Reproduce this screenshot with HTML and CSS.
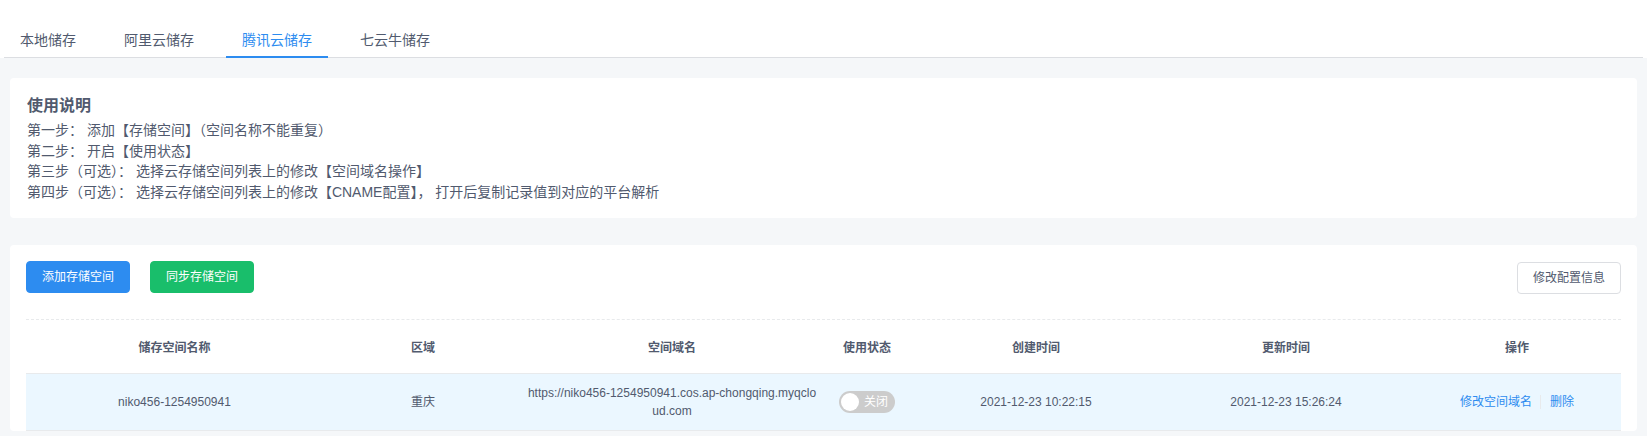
FILE: index.html
```html
<!DOCTYPE html>
<html lang="zh-CN">
<head>
	<meta charset="UTF-8">
	<title>储存配置</title>
	<link rel="stylesheet" href="styles.css">
</head>
<body>
	<div class="tabs">
		<div class="tabs-nav">
			<a href="#" class="tab">本地储存</a>
			<a href="#" class="tab">阿里云储存</a>
			<a href="#" class="tab tab-active">腾讯云储存</a>
			<a href="#" class="tab">七云牛储存</a>
		</div>
	</div>
	<div class="content">
		<div class="panel panel-help">
			<h3 class="help-title">使用说明</h3>
			<p>第一步： 添加【存储空间】（空间名称不能重复）</p>
			<p>第二步： 开启【使用状态】</p>
			<p>第三步（可选）： 选择云存储空间列表上的修改【空间域名操作】</p>
			<p>第四步（可选）： 选择云存储空间列表上的修改【CNAME配置】， 打开后复制记录值到对应的平台解析</p>
		</div>
		<div class="panel panel-list">
			<div class="toolbar">
				<div class="toolbar-left">
					<a href="#" class="btn btn-primary">添加存储空间</a>
					<a href="#" class="btn btn-success">同步存储空间</a>
				</div>
				<a href="#" class="btn btn-default">修改配置信息</a>
			</div>
			<table class="table">
				<colgroup>
					<col style="width:297px">
					<col style="width:200px">
					<col style="width:298px">
					<col style="width:92px">
					<col style="width:246px">
					<col style="width:254px">
					<col>
				</colgroup>
				<thead>
					<tr>
						<th>储存空间名称</th>
						<th>区域</th>
						<th>空间域名</th>
						<th>使用状态</th>
						<th>创建时间</th>
						<th>更新时间</th>
						<th>操作</th>
					</tr>
				</thead>
				<tbody>
					<tr class="row-hover">
						<td>niko456-1254950941</td>
						<td>重庆</td>
						<td class="cell-url">https://niko456-1254950941.cos.ap-chongqing.myqcloud.com</td>
						<td>
							<span class="switch">
								<span class="switch-knob"></span>
								<span class="switch-text">关闭</span>
							</span>
						</td>
						<td>2021-12-23 10:22:15</td>
						<td>2021-12-23 15:26:24</td>
						<td>
							<span class="ops">
								<a href="#">修改空间域名</a>
								<i class="ops-divider"></i>
								<a href="#">删除</a>
							</span>
						</td>
					</tr>
				</tbody>
			</table>
		</div>
	</div>
</body>
</html>
```

FILE: styles.css
```css
* {
	padding: 0;
	margin: 0;
	box-sizing: border-box;
}
body {
	font-family: "Liberation Sans", "Noto Sans CJK SC", sans-serif;
	color: #515a6e;
	background: #f5f7f9;
	height: 436px;
	overflow: hidden;
}
a {
	text-decoration: none;
}
.tabs {
	background: #fff;
	padding: 22px 4px 0;
}
.tabs-nav {
	display: flex;
	gap: 16px;
	border-bottom: 1px solid #dcdee2;
}
.tab {
	display: block;
	padding: 8px 16px 6px;
	font-size: 14px;
	line-height: 20px;
	color: #515a6e;
	border-bottom: 2px solid transparent;
	margin-bottom: -1px;
}
.tab-active {
	color: #2d8cf0;
	border-bottom-color: #2d8cf0;
}
.content {
	padding: 20px 10px 0;
}
.panel {
	background: #fff;
	border-radius: 4px;
}
.panel-help {
	padding: 16px 17px 15px;
	margin-bottom: 27px;
	font-size: 14px;
}
.help-title {
	font-size: 16px;
	line-height: 24px;
	font-weight: bold;
	color: #515a6e;
	margin-bottom: 2px;
}
.panel-help p {
	line-height: 20.7px;
}
.panel-list {
	padding: 16px 16px 0;
}
.toolbar {
	display: flex;
	justify-content: space-between;
	align-items: flex-start;
	padding-bottom: 25px;
	border-bottom: 1px dashed #e8eaec;
}
.toolbar-left {
	display: flex;
	gap: 20px;
}
.btn {
	display: block;
	width: 104px;
	height: 32px;
	line-height: 30px;
	text-align: center;
	font-size: 12px;
	border: 1px solid transparent;
	border-radius: 4px;
	color: #fff;
}
.btn-primary {
	background: #2d8cf0;
	border-color: #2d8cf0;
}
.btn-success {
	background: #19be6b;
	border-color: #19be6b;
}
.btn-default {
	background: #fff;
	border-color: #dcdee2;
	color: #515a6e;
	margin-top: 1px;
}
.table {
	width: 100%;
	table-layout: fixed;
	border-collapse: collapse;
	font-size: 12px;
}
.table th {
	height: 54px;
	font-weight: bold;
	text-align: center;
	color: #515a6e;
	border-bottom: 1px solid #e8eaec;
}
.table td {
	height: 57px;
	text-align: center;
	line-height: 18px;
	border-bottom: 1px solid #e8eaec;
}
.row-hover td {
	background: #ebf7ff;
}
.table td.cell-url {
	padding: 0 4px;
	word-break: break-all;
}
.switch {
	display: inline-flex;
	align-items: center;
	width: 56px;
	height: 22px;
	border-radius: 11px;
	background: #ccc;
	padding: 0 2px;
	vertical-align: middle;
}
.switch-knob {
	width: 18px;
	height: 18px;
	border-radius: 50%;
	background: #fff;
}
.switch-text {
	margin-left: 5px;
	color: #fff;
	font-size: 12px;
	line-height: 18px;
}
.ops {
	display: inline-flex;
	align-items: center;
}
.ops a {
	color: #2d8cf0;
}
.ops-divider {
	display: block;
	width: 1px;
	height: 14px;
	background: #e8eaec;
	margin: 0 9px 0 8px;
}
```
